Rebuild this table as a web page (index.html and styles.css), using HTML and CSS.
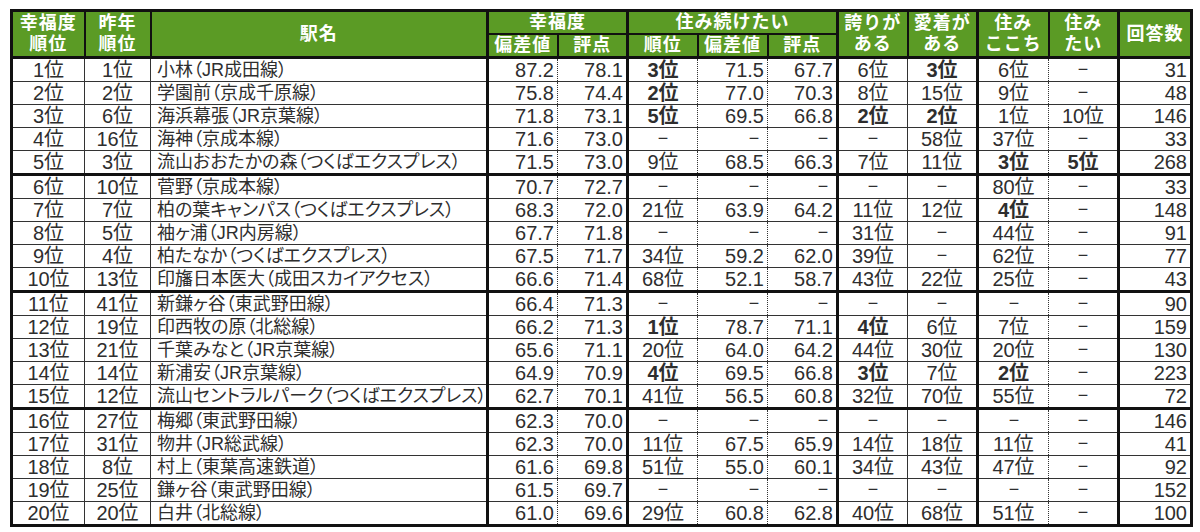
FILE: index.html
```html
<!DOCTYPE html>
<html lang="ja">
<head>
<meta charset="utf-8">
<title>幸福度ランキング</title>
<link rel="stylesheet" href="styles.css">
</head>
<body>
<table class="rank">
<colgroup>
<col class="w-rank"><col class="w-prev"><col class="w-name">
<col class="w-n"><col class="w-n"><col class="w-n"><col class="w-n"><col class="w-n">
<col class="w-n"><col class="w-n"><col class="w-n2"><col class="w-n"><col class="w-cnt">
</colgroup>
<thead>
<tr class="h1">
<th rowspan="2">幸福度<br>順位</th>
<th rowspan="2">昨年<br>順位</th>
<th rowspan="2">駅名</th>
<th colspan="2" class="grp">幸福度</th>
<th colspan="3" class="grp">住み続けたい</th>
<th rowspan="2" class="grp">誇りが<br>ある</th>
<th rowspan="2">愛着が<br>ある</th>
<th rowspan="2" class="grp">住み<br>ここち</th>
<th rowspan="2" class="dot">住み<br>たい</th>
<th rowspan="2" class="grp">回答数</th>
</tr>
<tr class="h2">
<th class="grp">偏差値</th>
<th class="dot">評点</th>
<th class="grp">順位</th>
<th class="dot">偏差値</th>
<th class="dot">評点</th>
</tr>
</thead>
<tbody>
<tr><td>1位</td><td>1位</td><td>小林（JR成田線）</td><td>87.2</td><td>78.1</td><td class="b">3位</td><td>71.5</td><td>67.7</td><td>6位</td><td class="b">3位</td><td>6位</td><td><span class="dash">－</span></td><td>31</td></tr>
<tr><td>2位</td><td>2位</td><td>学園前（京成千原線）</td><td>75.8</td><td>74.4</td><td class="b">2位</td><td>77.0</td><td>70.3</td><td>8位</td><td>15位</td><td>9位</td><td><span class="dash">－</span></td><td>48</td></tr>
<tr><td>3位</td><td>6位</td><td>海浜幕張（JR京葉線）</td><td>71.8</td><td>73.1</td><td class="b">5位</td><td>69.5</td><td>66.8</td><td class="b">2位</td><td class="b">2位</td><td>1位</td><td>10位</td><td>146</td></tr>
<tr><td>4位</td><td>16位</td><td>海神（京成本線）</td><td>71.6</td><td>73.0</td><td><span class="dash">－</span></td><td><span class="dash">－</span></td><td><span class="dash">－</span></td><td><span class="dash">－</span></td><td>58位</td><td>37位</td><td><span class="dash">－</span></td><td>33</td></tr>
<tr><td>5位</td><td>3位</td><td>流山おおたかの森（つくばエクスプレス）</td><td>71.5</td><td>73.0</td><td>9位</td><td>68.5</td><td>66.3</td><td>7位</td><td>11位</td><td class="b">3位</td><td class="b">5位</td><td>268</td></tr>
<tr><td>6位</td><td>10位</td><td>菅野（京成本線）</td><td>70.7</td><td>72.7</td><td><span class="dash">－</span></td><td><span class="dash">－</span></td><td><span class="dash">－</span></td><td><span class="dash">－</span></td><td><span class="dash">－</span></td><td>80位</td><td><span class="dash">－</span></td><td>33</td></tr>
<tr><td>7位</td><td>7位</td><td>柏の葉キャンパス（つくばエクスプレス）</td><td>68.3</td><td>72.0</td><td>21位</td><td>63.9</td><td>64.2</td><td>11位</td><td>12位</td><td class="b">4位</td><td><span class="dash">－</span></td><td>148</td></tr>
<tr><td>8位</td><td>5位</td><td>袖ヶ浦（JR内房線）</td><td>67.7</td><td>71.8</td><td><span class="dash">－</span></td><td><span class="dash">－</span></td><td><span class="dash">－</span></td><td>31位</td><td><span class="dash">－</span></td><td>44位</td><td><span class="dash">－</span></td><td>91</td></tr>
<tr><td>9位</td><td>4位</td><td>柏たなか（つくばエクスプレス）</td><td>67.5</td><td>71.7</td><td>34位</td><td>59.2</td><td>62.0</td><td>39位</td><td><span class="dash">－</span></td><td>62位</td><td><span class="dash">－</span></td><td>77</td></tr>
<tr><td>10位</td><td>13位</td><td>印旛日本医大（成田スカイアクセス）</td><td>66.6</td><td>71.4</td><td>68位</td><td>52.1</td><td>58.7</td><td>43位</td><td>22位</td><td>25位</td><td><span class="dash">－</span></td><td>43</td></tr>
<tr><td>11位</td><td>41位</td><td>新鎌ヶ谷（東武野田線）</td><td>66.4</td><td>71.3</td><td><span class="dash">－</span></td><td><span class="dash">－</span></td><td><span class="dash">－</span></td><td><span class="dash">－</span></td><td><span class="dash">－</span></td><td><span class="dash">－</span></td><td><span class="dash">－</span></td><td>90</td></tr>
<tr><td>12位</td><td>19位</td><td>印西牧の原（北総線）</td><td>66.2</td><td>71.3</td><td class="b">1位</td><td>78.7</td><td>71.1</td><td class="b">4位</td><td>6位</td><td>7位</td><td><span class="dash">－</span></td><td>159</td></tr>
<tr><td>13位</td><td>21位</td><td>千葉みなと（JR京葉線）</td><td>65.6</td><td>71.1</td><td>20位</td><td>64.0</td><td>64.2</td><td>44位</td><td>30位</td><td>20位</td><td><span class="dash">－</span></td><td>130</td></tr>
<tr><td>14位</td><td>14位</td><td>新浦安（JR京葉線）</td><td>64.9</td><td>70.9</td><td class="b">4位</td><td>69.5</td><td>66.8</td><td class="b">3位</td><td>7位</td><td class="b">2位</td><td><span class="dash">－</span></td><td>223</td></tr>
<tr><td>15位</td><td>12位</td><td>流山セントラルパーク（つくばエクスプレス）</td><td>62.7</td><td>70.1</td><td>41位</td><td>56.5</td><td>60.8</td><td>32位</td><td>70位</td><td>55位</td><td><span class="dash">－</span></td><td>72</td></tr>
<tr><td>16位</td><td>27位</td><td>梅郷（東武野田線）</td><td>62.3</td><td>70.0</td><td><span class="dash">－</span></td><td><span class="dash">－</span></td><td><span class="dash">－</span></td><td><span class="dash">－</span></td><td><span class="dash">－</span></td><td><span class="dash">－</span></td><td><span class="dash">－</span></td><td>146</td></tr>
<tr><td>17位</td><td>31位</td><td>物井（JR総武線）</td><td>62.3</td><td>70.0</td><td>11位</td><td>67.5</td><td>65.9</td><td>14位</td><td>18位</td><td>11位</td><td><span class="dash">－</span></td><td>41</td></tr>
<tr><td>18位</td><td>8位</td><td>村上（東葉高速鉄道）</td><td>61.6</td><td>69.8</td><td>51位</td><td>55.0</td><td>60.1</td><td>34位</td><td>43位</td><td>47位</td><td><span class="dash">－</span></td><td>92</td></tr>
<tr><td>19位</td><td>25位</td><td>鎌ヶ谷（東武野田線）</td><td>61.5</td><td>69.7</td><td><span class="dash">－</span></td><td><span class="dash">－</span></td><td><span class="dash">－</span></td><td><span class="dash">－</span></td><td><span class="dash">－</span></td><td><span class="dash">－</span></td><td><span class="dash">－</span></td><td>152</td></tr>
<tr><td>20位</td><td>20位</td><td>白井（北総線）</td><td>61.0</td><td>69.6</td><td>29位</td><td>60.8</td><td>62.8</td><td>40位</td><td>68位</td><td>51位</td><td><span class="dash">－</span></td><td>100</td></tr>
</tbody>
</table>
</body>
</html>
```

FILE: styles.css
```css
html, body {
  margin: 0;
  padding: 0;
  background: #ffffff;
}
body {
  padding: 9px 0 0 10px;
  font-family: "Liberation Sans", "Noto Sans CJK JP", sans-serif;
  color: #2e2e2e;
}
.rank {
  border-collapse: collapse;
  table-layout: fixed;
  width: 1183px;
  border: 3px solid #111;
}
.w-rank { width: 73px; }
.w-prev { width: 66px; }
.w-name { width: 337px; }
.w-n { width: 70px; }
.w-n2 { width: 71px; }
.w-cnt { width: 73px; }

.rank th {
  background: #5b9b25;
  color: #ffffff;
  font-weight: bold;
  font-size: 18px;
  letter-spacing: 1px;
  line-height: 21px;
  padding: 0;
  text-align: center;
  border: 2px solid #111;
}
.rank thead tr.h1 th { height: 21px; }
.rank thead tr.h2 th { height: 20px; border-bottom: 3px solid #111; }
.rank thead tr.h1 th[rowspan] { border-bottom: 3px solid #111; }
.rank th.grp { border-left: 3px solid #111; }
.rank th.dot { border-left: 1px dotted #222; }

.rank td {
  height: 22px;
  line-height: 22px;
  padding: 0 3px;
  font-size: 20px;
  white-space: nowrap;
  overflow: hidden;
  border-bottom: 1px solid #333;
  border-left: 1px solid #333;
  text-align: center;
}
.rank tbody tr:nth-child(5n) td { border-bottom: 3px solid #111; }

.rank td:nth-child(3) {
  text-align: left;
  padding-left: 6px;
  font-size: 18px;
  font-feature-settings: "palt" 1;
}
.rank td:nth-child(4),
.rank td:nth-child(5),
.rank td:nth-child(7),
.rank td:nth-child(8),
.rank td:nth-child(13) {
  text-align: right;
}
.rank td:nth-child(4),
.rank td:nth-child(6),
.rank td:nth-child(9),
.rank td:nth-child(11),
.rank td:nth-child(13) {
  border-left: 3px solid #111;
}
.rank td:nth-child(5),
.rank td:nth-child(7),
.rank td:nth-child(8),
.rank td:nth-child(12) {
  border-left: 1px dotted #333;
}
.rank td.b { font-weight: bold; }
.dash {
  display: inline-block;
  transform: scaleX(0.6);
}
```
